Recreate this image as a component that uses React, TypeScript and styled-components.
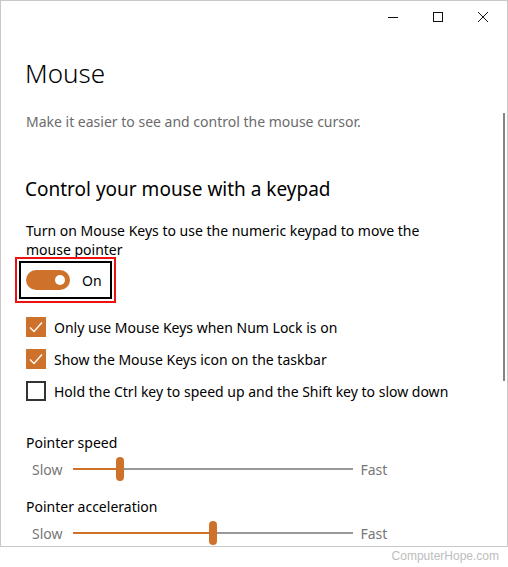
import React from 'react'
import styled, { createGlobalStyle } from 'styled-components'

const GlobalStyle = createGlobalStyle`
  html, body {
    margin: 0;
    padding: 0;
    background: #fff;
  }
  body {
    font-family: 'Noto Sans', 'Open Sans', sans-serif;
  }
`

const accent = '#ce712b'

const Page = styled.div`
  width: 508px;
  height: 567px;
  display: flex;
  flex-direction: column;
`

const Window = styled.div`
  position: relative;
  width: 508px;
  height: 547px;
  box-sizing: border-box;
  border: 1px solid #c8c8c8;
  overflow: hidden;
  display: flex;
  flex-direction: column;
`

const TitleBar = styled.div`
  height: 32px;
  display: flex;
  justify-content: flex-end;
  padding-right: 2px;
`

const CaptionButton = styled.div`
  width: 45px;
  height: 32px;
  display: flex;
  align-items: center;
  justify-content: center;
  color: #111;
`

const Content = styled.div`
  padding: 0 24px;
  display: flex;
  flex-direction: column;
`

const Title = styled.h1`
  margin: 22px 0 0;
  font-size: 26px;
  line-height: 36px;
  font-weight: 300;
  color: #000;
`

const Description = styled.p`
  margin: 21px 0 0 1px;
  font-size: 14px;
  line-height: 20px;
  color: #6b6b6b;
`

const SectionHeading = styled.h2`
  margin: 44px 0 0;
  font-size: 19px;
  line-height: 26px;
  font-weight: 400;
  color: #000;
`

const Text = styled.p`
  margin: 19px 0 0 1px;
  font-size: 14px;
  line-height: 19px;
  color: #000;
  width: 430px;
`

const Highlight = styled.div`
  align-self: flex-start;
  margin: -2px 0 0 -10px;
  padding: 2px;
  border: 2px solid #ee1111;
`

const FocusBox = styled.div`
  display: flex;
  align-items: center;
  gap: 12px;
  height: 34px;
  padding: 0 8px 0 5px;
  border: 2px solid #000;
`

const Track = styled.div<{ $on: boolean }>`
  width: 44px;
  height: 20px;
  border-radius: 10px;
  background: ${({ $on }) => ($on ? accent : '#fff')};
  position: relative;
`

const Knob = styled.div`
  position: absolute;
  top: 5px;
  right: 5px;
  width: 10px;
  height: 10px;
  border-radius: 50%;
  background: #fff;
`

const ToggleLabel = styled.span`
  font-size: 14px;
  color: #000;
`

const Options = styled.div`
  margin-top: 14px;
  display: flex;
  flex-direction: column;
  gap: 12px;
`

const CheckRow = styled.label`
  display: flex;
  align-items: center;
  gap: 8px;
  height: 20px;
  font-size: 14px;
  color: #000;
  margin-left: 1px;
`

const Box = styled.span<{ $checked: boolean }>`
  width: 20px;
  height: 20px;
  box-sizing: border-box;
  display: flex;
  align-items: center;
  justify-content: center;
  background: ${({ $checked }) => ($checked ? accent : '#fff')};
  border: ${({ $checked }) => ($checked ? 'none' : '2px solid #333')};
`

const SliderLabel = styled.div<{ $first?: boolean }>`
  margin: ${({ $first }) => ($first ? '32px' : '16px')} 0 0 1px;
  font-size: 14px;
  line-height: 20px;
  color: #000;
`

const SliderRow = styled.div`
  display: flex;
  align-items: center;
  height: 24px;
  margin-top: 4px;
  padding-left: 7px;
`

const SliderEnd = styled.span`
  font-size: 14px;
  color: #777;
`

const SliderTrack = styled.div`
  position: relative;
  width: 280px;
  height: 2px;
  margin: 0 8px 0 10px;
  background: #999;
`

const SliderFill = styled.div`
  position: absolute;
  left: 0;
  top: 0;
  height: 2px;
  background: ${accent};
`

const Thumb = styled.div`
  position: absolute;
  top: -11px;
  width: 8px;
  height: 24px;
  margin-left: -4px;
  border-radius: 4px;
  background: ${accent};
`

const Scrollbar = styled.div`
  position: absolute;
  right: 2px;
  top: 112px;
  width: 2px;
  height: 268px;
  background: #858585;
`

const Watermark = styled.div`
  align-self: flex-end;
  margin: 2px 9px 0 0;
  font-family: 'Liberation Sans', Arial, sans-serif;
  font-size: 12px;
  color: #bdbdbd;
`

function Checkbox({ checked, label }: { checked: boolean; label: string }) {
  return (
    <CheckRow>
      <Box $checked={checked}>
        {checked && (
          <svg width="14" height="12" viewBox="0 0 14 12">
            <path d="M1 6.5 L5 10.5 L13 1.5" fill="none" stroke="#fff" strokeWidth="1.4" />
          </svg>
        )}
      </Box>
      {label}
    </CheckRow>
  )
}

function Slider({ value }: { value: number }) {
  return (
    <SliderRow>
      <SliderEnd>Slow</SliderEnd>
      <SliderTrack>
        <SliderFill style={{ width: `${value}%` }} />
        <Thumb style={{ left: `${value}%` }} />
      </SliderTrack>
      <SliderEnd>Fast</SliderEnd>
    </SliderRow>
  )
}

export default function App() {
  return (
    <Page>
      <GlobalStyle />
      <Window>
        <TitleBar>
          <CaptionButton>
            <svg width="12" height="12" viewBox="0 0 12 12">
              <path d="M1 6.5 H11" stroke="#111" strokeWidth="1" />
            </svg>
          </CaptionButton>
          <CaptionButton>
            <svg width="12" height="12" viewBox="0 0 12 12">
              <rect x="1.5" y="1.5" width="9" height="9" fill="none" stroke="#111" strokeWidth="1" />
            </svg>
          </CaptionButton>
          <CaptionButton>
            <svg width="12" height="12" viewBox="0 0 12 12">
              <path d="M1 1 L11 11 M11 1 L1 11" stroke="#111" strokeWidth="1" />
            </svg>
          </CaptionButton>
        </TitleBar>
        <Content>
          <Title>Mouse</Title>
          <Description>Make it easier to see and control the mouse cursor.</Description>
          <SectionHeading>Control your mouse with a keypad</SectionHeading>
          <Text>Turn on Mouse Keys to use the numeric keypad to move the mouse pointer</Text>
          <Highlight>
            <FocusBox>
              <Track $on>
                <Knob />
              </Track>
              <ToggleLabel>On</ToggleLabel>
            </FocusBox>
          </Highlight>
          <Options>
            <Checkbox checked label="Only use Mouse Keys when Num Lock is on" />
            <Checkbox checked label="Show the Mouse Keys icon on the taskbar" />
            <Checkbox checked={false} label="Hold the Ctrl key to speed up and the Shift key to slow down" />
          </Options>
          <SliderLabel $first>Pointer speed</SliderLabel>
          <Slider value={17} />
          <SliderLabel>Pointer acceleration</SliderLabel>
          <Slider value={50} />
        </Content>
        <Scrollbar />
      </Window>
      <Watermark>ComputerHope.com</Watermark>
    </Page>
  )
}
